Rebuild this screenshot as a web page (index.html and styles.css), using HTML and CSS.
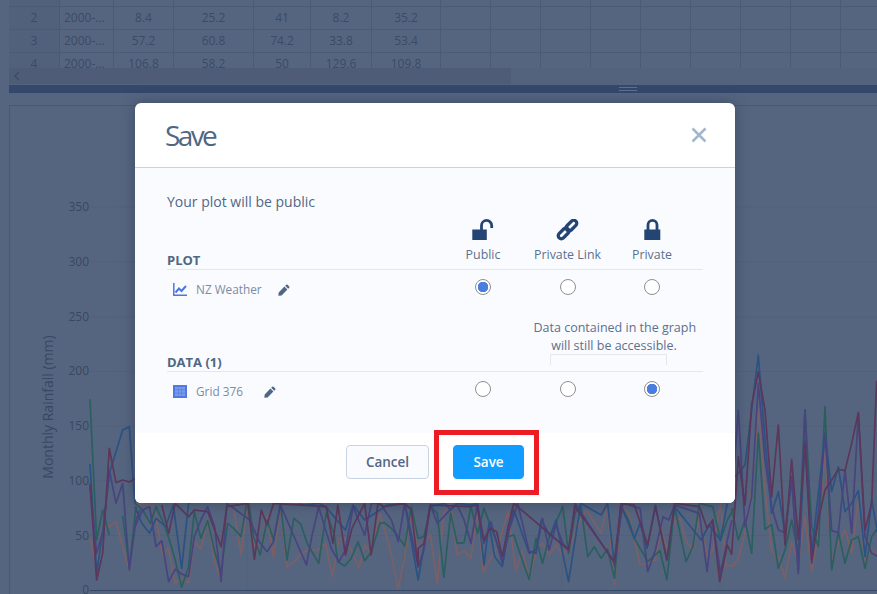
FILE: index.html
```html
<!DOCTYPE html>
<html lang="en">
<head>
<meta charset="utf-8">
<title>Save plot</title>
<link rel="stylesheet" href="styles.css">
</head>
<body>
<div class="workspace">
  <div class="sheet">
    <div class="rowhead"></div><div></div><div></div><div></div><div></div><div></div><div></div><div></div><div></div><div></div><div></div><div></div><div></div><div></div><div></div><div></div>
    <div class="rowhead">2</div><div class="date">2000-...</div><div>8.4</div><div>25.2</div><div>41</div><div>8.2</div><div>35.2</div><div></div><div></div><div></div><div></div><div></div><div></div><div></div><div></div><div></div>
    <div class="rowhead">3</div><div class="date">2000-...</div><div>57.2</div><div>60.8</div><div>74.2</div><div>33.8</div><div>53.4</div><div></div><div></div><div></div><div></div><div></div><div></div><div></div><div></div><div></div>
    <div class="rowhead">4</div><div class="date">2000-...</div><div>106.8</div><div>58.2</div><div>50</div><div>129.6</div><div>109.8</div><div></div><div></div><div></div><div></div><div></div><div></div><div></div><div></div><div></div>
  </div>
  <div class="hscroll">
    <div class="hthumb">
      <svg class="harrow" width="8" height="10" viewBox="0 0 8 10"><path d="M6 1 2 5l4 4" fill="none" stroke="#3f4d68" stroke-width="1.6"/></svg>
    </div>
  </div>
  <div class="splitter"><span class="grip"></span></div>
  <div class="plotpanel">
    <svg class="chart" viewBox="9 105 868 489" width="868" height="489">
      <g class="grid">
        <path d="M90 207H877M90 262H877M90 317H877M90 371.500H877M90 426H877M90 481H877M90 535.500H877"/>
        <path d="M247 105V590M403 105V590M562 105V590M720 105V590"/>
      </g>
      <path class="xaxis" d="M90 590.500H877"/>
      <g class="ticks">
        <text x="89" y="211">350</text>
        <text x="89" y="266">300</text>
        <text x="89" y="321">250</text>
        <text x="89" y="375">200</text>
        <text x="89" y="430">150</text>
        <text x="89" y="485">100</text>
        <text x="89" y="540">50</text>
        <text x="89" y="594">0</text>
      </g>
      <text class="ytitle" transform="translate(53 407) rotate(-90)">Monthly Rainfall (mm)</text>

      <g class="traces" transform="translate(0 340) scale(.33333)">
        <polyline class="t-brown" points="270,595 290,680 308,560 328,560 348,545 368,620 388,690 408,520"/>
        <polyline class="t-green" points="270,178 290,600 308,510 328,585"/>
        <polyline class="t-green" points="368,527 388,680 408,500"/>
        <polyline class="t-blue" points="270,372 290,700 310,560 328,400 348,335 368,270 388,260 405,490"/>
        <polyline class="t-purple" points="270,440 290,640 310,570 328,390 348,490 368,430 388,690 408,540 420,510"/>
        <polyline class="t-maroon" points="270,430 290,720 308,640 328,325 348,428 368,420 388,426 408,415"/>
      </g>

      <g class="traces" transform="translate(135 500) scale(.38265 .33333)">
        <polyline class="t-brown" points="0,20 20,10 50,20 72,165 88,145 105,250 122,235 140,248 155,125 172,148 190,60 208,185 225,240 240,20 258,25 277,165 295,-10 310,130 327,162 345,50 362,172 380,20 397,203 415,185 435,160 455,150 478,150 498,130 516,230 533,118 548,115 565,150 585,205 600,135 618,160 640,40 665,140 688,265 705,170 722,30 738,150 755,125 772,105 790,250 807,40 825,10 842,165 860,152 878,175 895,30 910,215 930,175 950,135 975,30 995,212 1012,152 1030,235 1050,145 1065,130 1082,165 1100,135 1118,165 1135,145 1150,100 1165,60 1180,30 1218,100 1235,20 1253,255 1270,20 1290,40 1320,195 1340,190 1360,180 1375,85 1390,150 1410,65 1425,55 1440,125 1458,150 1475,50 1495,170 1510,150 1530,10 1545,200 1568,195"/>
        <polyline class="t-green" points="0,10 20,30 40,70 55,20 75,70 90,120 105,180 122,262 140,200 155,35 172,115 190,62 208,155 225,215 242,70 258,85 277,110 295,-10 310,110 327,165 345,60 362,120 380,10 397,180 415,55 433,72 450,130 480,190 500,38 520,100 530,185 548,198 565,175 583,125 600,182 618,155 640,70 652,68 670,85 688,110 705,138 722,20 740,115 755,110 772,20 790,40 807,232 825,40 842,130 860,128 878,20 895,100 912,25 930,80 960,170 975,110 990,105 1012,180 1030,238 1048,115 1065,190 1082,115 1118,20 1133,160 1150,40 1165,15 1183,170 1200,140 1218,175 1235,148 1253,235 1270,20 1290,60 1305,115 1340,185 1372,152 1390,240 1410,20 1440,185 1458,140 1475,10 1510,20 1530,122 1548,60 1568,20"/>
        <polyline class="t-blue" points="0,20 18,70 38,100 55,55 80,80 100,15 122,205 140,10 170,-10 430,-10 430,15 445,15 480,10 498,20 550,90 570,15 600,60 660,15 705,10 740,240 755,140 770,20 810,10 825,30 842,10 875,15 895,10 912,195 925,70 940,170 960,200 975,100 990,30 1030,160 1048,150 1062,60 1085,110 1100,60 1133,245 1165,10 1218,45 1235,10 1253,200 1270,15 1305,115 1320,70 1338,145 1360,15 1390,180 1410,20 1480,120 1500,75 1530,120 1548,10"/>
        <polyline class="t-purple" points="0,80 20,30 38,20 55,140 70,122 88,245 105,208 122,222 140,230 155,110 172,60 190,20 208,80 225,245 240,10 300,60 325,125 345,155 362,125 380,15 448,195 462,110 480,20 498,90 515,150 533,185 550,150 570,20 600,105 618,10 640,10 670,60 688,125 705,10 740,200 755,150 772,15 790,70 840,10 860,60 878,130 895,10 912,130 930,65 960,190 975,100 1000,10 1030,155 1048,160 1065,55 1082,150 1100,75 1118,130 1133,150 1150,10 1253,190 1275,10 1290,15 1320,25 1340,215 1360,150 1380,50 1395,60 1410,15 1475,40 1495,215 1510,60 1530,220 1548,120 1560,60"/>
        <polyline class="t-maroon" points="70,15 88,100 105,10 140,50 155,30 190,35 225,140 240,20 295,10 312,178 330,30 345,75 362,10 500,20 517,130 530,15 550,165 567,85 600,10 617,165 635,10 650,20 705,10 722,30 740,200 740,145 755,130 772,15 875,20 893,15 912,120 928,85 945,95 960,170 975,80 990,10 1133,150 1150,20 1253,185 1270,10 1305,15 1340,135 1360,20 1390,180 1410,10 1475,20 1495,85 1510,60 1528,245 1548,135 1560,165"/>
      </g>

      <g class="traces" transform="translate(730 340) scale(.33333)">
        <polyline class="t-brown" points="5,680 25,655 45,580 65,450 85,210 105,450 125,635 145,650 165,715 185,605 205,670 225,530 245,695 265,580 285,340 305,665 325,610 345,570 365,640 385,480 405,665 425,625 445,645"/>
        <polyline class="t-green" points="5,505 25,600 45,540 65,640 85,280 105,568 125,553 145,685 165,630 185,540 205,640 225,210 245,560 265,620 285,200 305,690 325,575 345,670 365,600 385,590 405,685 425,590 445,560"/>
        <polyline class="t-blue" points="5,420 25,400 45,375 65,210 85,45 105,300 125,520 145,455 165,580 185,420 205,690 225,300 245,640 265,460 285,280 305,455 325,380 345,515 365,490 385,452 405,650 425,480 445,590"/>
        <polyline class="t-purple" points="5,480 25,210 45,560 65,470 85,130 105,360 125,500 145,570 165,578 185,410 205,700 225,210 245,670 265,520 285,280 305,572 325,578 345,390 365,580 385,218 405,590 425,640 445,650"/>
        <polyline class="t-maroon" points="5,640 25,350 45,495 65,195 85,95 105,210 125,470 145,255 165,615 185,358 205,600 225,310 245,660 265,540 285,450 305,420 325,388 345,392 365,310 385,218 405,570 425,490 440,122"/>
      </g>
    </svg>
  </div>
</div>

<div class="modal">
  <header class="modal-head">
    <h1 class="modal-title">Save</h1>
    <svg class="close" width="16" height="16" viewBox="0 0 16 16"><path d="M1.500 1.500l13 13M14.500 1.500l-13 13" fill="none" stroke="#a2b6cf" stroke-width="2.500"/></svg>
  </header>
  <div class="modal-body">
    <p class="intro">Your plot will be public</p>

    <section class="section">
      <div class="head head-plot">
        <div class="section-name">PLOT</div>
        <div class="level">
          <svg class="level-icon" width="24" height="24" viewBox="0 0 24 24"><rect x="1.300" y="10.500" width="14.500" height="10.500" fill="#244474"/><path d="M10.500 11V6.500a5.100 5.100 0 0 1 10.200 0V9" fill="none" stroke="#244474" stroke-width="2.800"/></svg>
          <span>Public</span>
        </div>
        <div class="level">
          <svg class="level-icon" width="24" height="24" viewBox="0 0 24 24"><g fill="none" stroke="#244474" stroke-width="3.300" transform="rotate(-45 11.500 10.500)"><rect x="-.3" y="7.450" width="12.500" height="6.100" rx="3"/><rect x="10.800" y="7.450" width="12.500" height="6.100" rx="3"/></g></svg>
          <span>Private Link</span>
        </div>
        <div class="level">
          <svg class="level-icon" width="24" height="24" viewBox="0 0 24 24"><rect x="4.300" y="10.500" width="16" height="10.500" fill="#244474"/><path d="M8 11V5.900a4.500 4.500 0 0 1 9 0V11" fill="none" stroke="#244474" stroke-width="2.800"/></svg>
          <span>Private</span>
        </div>
      </div>
      <div class="row">
        <div class="item">
          <svg class="item-icon" width="14" height="13" viewBox="0 0 14 13"><path d="M.8 0v12.200H14" fill="none" stroke="#4a78e0" stroke-width="1.500"/><path d="M2.500 9.500 6 5.500 8.500 8l4.500-5" fill="none" stroke="#4a78e0" stroke-width="2"/></svg>
          <span class="item-name">NZ Weather</span>
          <svg class="pencil pencil-plot" width="12" height="12" viewBox="0 0 12 12"><path d="M8.200.8a1 1 0 0 1 1.400 0l1.600 1.600a1 1 0 0 1 0 1.400l-1 1L7.200 1.800zM6.400 2.600l3 3L3.600 11.400.3 11.800l.4-3.400z" fill="#506784"/></svg>
        </div>
        <input class="radio" type="radio" name="plot" checked>
        <input class="radio" type="radio" name="plot">
        <input class="radio" type="radio" name="plot">
      </div>
    </section>

    <section class="section">
      <div class="head head-data">
        <div class="section-name">DATA (1)</div>
        <div class="note">
          <p class="note-text">Data contained in the graph<br>will still be accessible.</p>
          <div class="note-bracket"></div>
        </div>
      </div>
      <div class="row">
        <div class="item">
          <svg class="item-icon" width="14" height="13" viewBox="0 0 14 13"><rect width="14" height="13" fill="#4f7ae0"/><path d="M2 2h3v2.500H2zM5.500 2h3v2.500h-3zM9 2h3v2.500H9zM2 5.300h3v2.500H2zM5.500 5.300h3v2.500h-3zM9 5.300h3v2.500H9zM2 8.600h3V11H2zM5.500 8.600h3V11h-3zM9 8.600h3V11H9z" fill="#7c9aea"/></svg>
          <span class="item-name">Grid 376</span>
          <svg class="pencil pencil-data" width="12" height="12" viewBox="0 0 12 12"><path d="M8.200.8a1 1 0 0 1 1.400 0l1.600 1.600a1 1 0 0 1 0 1.400l-1 1L7.200 1.800zM6.400 2.600l3 3L3.600 11.400.3 11.800l.4-3.400z" fill="#506784"/></svg>
        </div>
        <input class="radio" type="radio" name="data">
        <input class="radio" type="radio" name="data">
        <input class="radio" type="radio" name="data" checked>
      </div>
    </section>
  </div>
  <footer class="modal-foot">
    <button class="btn btn-cancel" type="button">Cancel</button>
    <button class="btn btn-save" type="button">Save</button>
  </footer>
</div>
<div class="callout"></div>
</body>
</html>
```
FILE: styles.css
```css
* { box-sizing: border-box; }

html, body { margin: 0; height: 100%; }

body {
  position: relative;
  width: 877px;
  height: 594px;
  overflow: hidden;
  background: #56657f;
  font-family: "Open Sans", "Noto Sans", sans-serif;
  color: #506784;
}

.workspace {
  padding-left: 9px;
  height: 594px;
  overflow: hidden;
}

.sheet {
  display: grid;
  grid-template-columns: 51px 54px 60px 80px 57px 61px 69px repeat(9, 50px);
  grid-template-rows: 7px repeat(3, 23px);
  height: 68px;
  width: 868px;
  overflow: hidden;
  font-size: 12px;
  color: #3b4a67;
}

.sheet > div {
  display: flex;
  align-items: center;
  justify-content: center;
  padding-bottom: 1px;
  border-right: 1px solid #4c5a75;
  border-bottom: 1px solid #4c5a75;
  white-space: nowrap;
}

.sheet > .rowhead { background: #52617b; }
.sheet > .date { justify-content: flex-start; padding-left: 4px; }

.hscroll {
  height: 17px;
  background: #54637d;
}

.hthumb {
  display: flex;
  align-items: center;
  width: 502px;
  height: 16px;
  background: #4e5c77;
}

.harrow { margin-left: 4px; }

.splitter {
  display: flex;
  align-items: center;
  height: 8px;
  padding-left: 610px;
  background: #33486a;
}

.grip {
  display: block;
  width: 18px;
  height: 4px;
  border-top: 1px solid #5f7091;
  border-bottom: 1px solid #5f7091;
}

.plotpanel {
  margin-top: 12px;
  height: 489px;
  border-left: 1px solid #4a5973;
  border-top: 1px solid #4a5973;
}

.chart { display: block; margin: -1px 0 0 -1px; }

.grid path { fill: none; stroke: #52617b; stroke-width: 1; }
.xaxis { fill: none; stroke: #354868; stroke-width: 1; }

.ticks text {
  font-size: 12px;
  fill: #384763;
  text-anchor: end;
}

.ytitle {
  font-size: 14px;
  fill: #384763;
  text-anchor: middle;
}

.traces polyline {
  fill: none;
  stroke-width: 1.700;
  stroke-linejoin: round;
  vector-effect: non-scaling-stroke;
}

.t-blue { stroke: #2a5282; }
.t-purple { stroke: #47447f; }
.t-maroon { stroke: #5b3759; }
.t-green { stroke: #2a5f5e; }
.t-brown { stroke: #7a6066; }

.modal {
  position: absolute;
  left: 135px;
  top: 103px;
  width: 600px;
  height: 400px;
  display: flex;
  flex-direction: column;
  background: #fff;
  border-radius: 6px;
  box-shadow: 0 0 14px rgba(35, 50, 80, .5);
  overflow: hidden;
}

.modal-head {
  display: flex;
  align-items: center;
  justify-content: space-between;
  height: 65px;
  padding: 0 28px 0 30px;
  border-bottom: 1px solid #c8d4e3;
}

.modal-title {
  margin: 0;
  font-size: 28px;
  font-weight: 400;
  letter-spacing: -2.600px;
  color: #506784;
}

.modal-body {
  height: 265px;
  padding: 24px 32px 0;
  background: #fafbfe;
}

.intro {
  margin: 0;
  font-size: 14px;
  line-height: 20px;
}

.head, .row {
  display: grid;
  grid-template-columns: 273.5px 85px 84px 85px;
}

.head { border-bottom: 1px solid #e4e7ec; align-items: end; width: 536px; }
.head-plot { height: 58px; }
.head-data { height: 68px; }

.section-name {
  font-size: 13px;
  font-weight: 700;
  line-height: 18px;
}

.level {
  display: flex;
  flex-direction: column;
  align-items: center;
  padding-bottom: 5px;
  font-size: 12.400px;
  line-height: 18px;
  color: #5a7090;
}

.level-icon { display: block; margin-bottom: 3px; }

.note {
  grid-column: 3 / 5;
  padding-bottom: 6px;
  font-size: 12.500px;
  color: #5a7090;
}

.note-text {
  margin: 0;
  padding-left: 8px;
  line-height: 18px;
  text-align: center;
  white-space: nowrap;
}

.note-bracket {
  width: 117px;
  height: 11px;
  margin-top: -1px;
  margin-left: 24.500px;
  border: 1px solid #e4e7ec;
  border-bottom: 0;
}

.row {
  align-items: center;
  justify-items: center;
  height: 34px;
}

.item {
  display: flex;
  align-items: center;
  justify-self: start;
  padding: 4px 0 0 6px;
  font-size: 11.800px;
}

.item-icon { flex: none; }
.item-name { margin-left: 9px; color: #7b8ba4; }
.pencil { flex: none; }
.pencil-plot { margin-left: 16px; margin-top: 2px; }
.pencil-data { margin-left: 21px; margin-top: 2px; }

.radio {
  appearance: none;
  display: block;
  width: 16px;
  height: 16px;
  margin: 0;
  border: 1px solid #8f8f8f;
  border-radius: 50%;
  background: #fff;
}

.radio:checked {
  background: radial-gradient(circle, #4a7de0 0 5px, #fff 5.5px);
}

.modal-foot {
  display: flex;
  flex: 1;
  align-items: flex-start;
  justify-content: center;
  gap: 24px;
  padding: 12px 0 0 0;
  background: #fff;
}

.btn {
  height: 34px;
  margin: 0;
  padding: 0 0 1px;
  border: 1px solid;
  border-radius: 4px;
  font-family: inherit;
  font-size: 13.500px;
  font-weight: 600;
}

.btn-cancel {
  width: 83px;
  background: #fafbfe;
  border-color: #c8d4e3;
  color: #506784;
}

.btn-save {
  width: 71px;
  background: #119dff;
  border-color: #119dff;
  color: #fff;
}

.close { display: block; }

.callout {
  position: absolute;
  left: 434px;
  top: 430px;
  width: 105px;
  height: 65px;
  border: 5px solid #ed1c24;
}
```
